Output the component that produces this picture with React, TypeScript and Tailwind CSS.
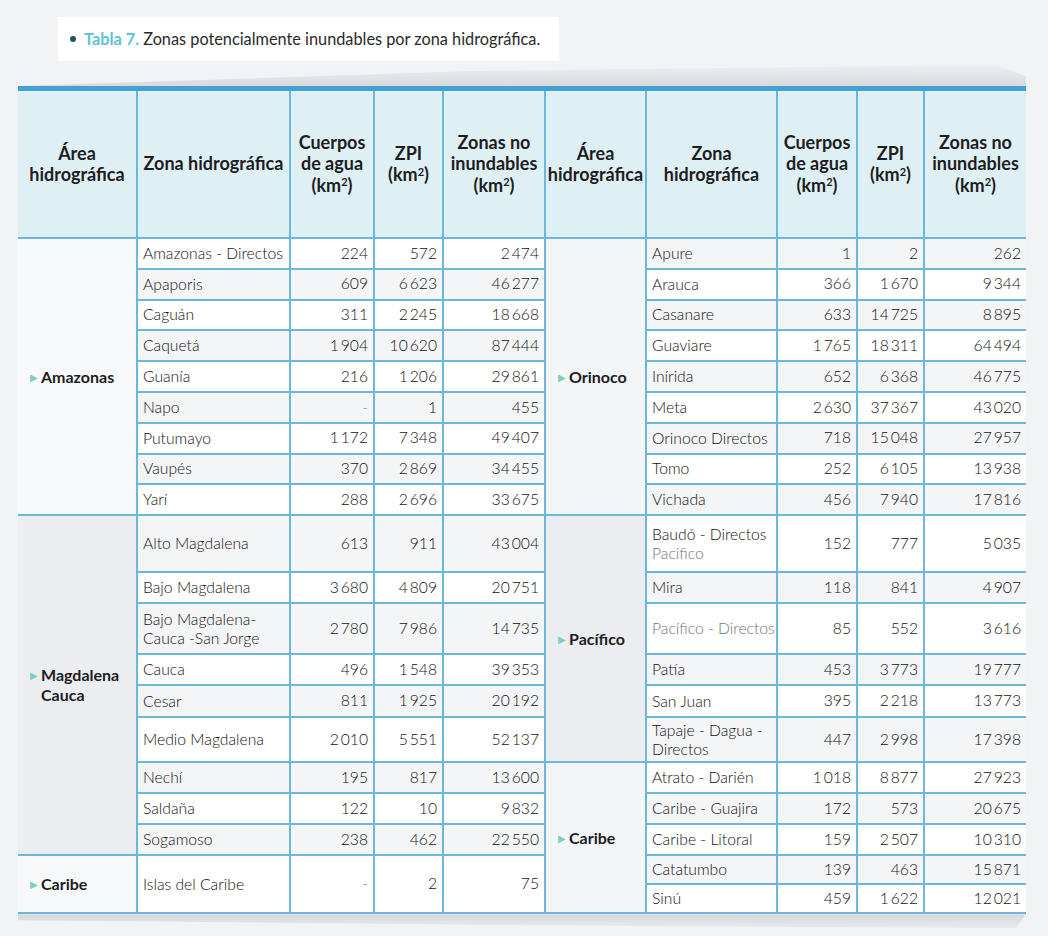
import React from 'react'

type DataRow = [string, string, string, string]

const leftRows: DataRow[] = [
  ['Amazonas - Directos', '224', '572', '2 474'],
  ['Apaporis', '609', '6 623', '46 277'],
  ['Caguán', '311', '2 245', '18 668'],
  ['Caquetá', '1 904', '10 620', '87 444'],
  ['Guanía', '216', '1 206', '29 861'],
  ['Napo', '-', '1', '455'],
  ['Putumayo', '1 172', '7 348', '49 407'],
  ['Vaupés', '370', '2 869', '34 455'],
  ['Yarí', '288', '2 696', '33 675'],
  ['Alto Magdalena', '613', '911', '43 004'],
  ['Bajo Magdalena', '3 680', '4 809', '20 751'],
  ['Bajo Magdalena-\nCauca -San Jorge', '2 780', '7 986', '14 735'],
  ['Cauca', '496', '1 548', '39 353'],
  ['Cesar', '811', '1 925', '20 192'],
  ['Medio Magdalena', '2 010', '5 551', '52 137'],
  ['Nechí', '195', '817', '13 600'],
  ['Saldaña', '122', '10', '9 832'],
  ['Sogamoso', '238', '462', '22 550'],
  ['Islas del Caribe', '-', '2', '75'],
]

const rightRows: DataRow[] = [
  ['Apure', '1', '2', '262'],
  ['Arauca', '366', '1 670', '9 344'],
  ['Casanare', '633', '14 725', '8 895'],
  ['Guaviare', '1 765', '18 311', '64 494'],
  ['Inírida', '652', '6 368', '46 775'],
  ['Meta', '2 630', '37 367', '43 020'],
  ['Orinoco Directos', '718', '15 048', '27 957'],
  ['Tomo', '252', '6 105', '13 938'],
  ['Vichada', '456', '7 940', '17 816'],
  ['Baudó - Directos', '152', '777', '5 035'],
  ['Mira', '118', '841', '4 907'],
  ['Pacífico - Directos', '85', '552', '3 616'],
  ['Patía', '453', '3 773', '19 777'],
  ['San Juan', '395', '2 218', '13 773'],
  ['Tapaje - Dagua -\nDirectos', '447', '2 998', '17 398'],
  ['Atrato - Darién', '1 018', '8 877', '27 923'],
  ['Caribe - Guajira', '172', '573', '20 675'],
  ['Caribe - Litoral', '159', '2 507', '10 310'],
  ['Catatumbo', '139', '463', '15 871'],
  ['Sinú', '459', '1 622', '12 021'],
]

const fmt = (s: string) => s.replace(/ /g, '\u2009')

function Km() {
  return (
    <>
      (km<sup className="text-[11px]">2</sup>)
    </>
  )
}

function Head({ children }: { children: React.ReactNode }) {
  return (
    <div className="bg-[#dff0f4] flex items-center justify-center text-center font-bold text-[18px] leading-[21.5px] text-[#1d1d1f]">
      <div>{children}</div>
    </div>
  )
}

function Area({ label, span, bg }: { label: React.ReactNode; span: string; bg: string }) {
  return (
    <div className={`${span} ${bg} flex items-center pl-[12px]`}>
      <div className="flex items-start gap-[3px]">
        <span className="text-[#7fcfbf] text-[10px] leading-[20px]">▶</span>
        <span className="font-bold text-[16px] leading-[20px] text-[#1d1d1f]">{label}</span>
      </div>
    </div>
  )
}

function Zone({ text, bg, span = '' }: { text: React.ReactNode; bg: string; span?: string }) {
  return (
    <div className={`${span} ${bg} flex items-center pl-[5px] text-[15.7px] leading-[19px] font-light text-[#141112] whitespace-pre-line`}>
      <div>{text}</div>
    </div>
  )
}

function Num({ v, bg, span = '' }: { v: string; bg: string; span?: string }) {
  return (
    <div
      className={`${span} ${bg} flex items-center justify-end pr-[5px] text-[15.7px] font-light ${
        v === '-' ? 'text-[#8a8a8a]' : 'text-[#141112]'
      }`}
    >
      {fmt(v)}
    </div>
  )
}

export default function App() {
  const cells: React.ReactNode[] = []

  for (let i = 0; i < 20; i++) {
    const lbg = i % 2 === 0 ? 'bg-white' : 'bg-[#f4f5f7]'
    const rbg = i % 2 === 0 ? 'bg-[#f4f5f7]' : 'bg-white'

    // lado izquierdo
    if (i === 0) cells.push(<Area key="a-amz" label="Amazonas" span="row-span-9" bg="bg-[#f8f9fa]" />)
    if (i === 9)
      cells.push(
        <Area
          key="a-mag"
          label={
            <>
              Magdalena
              <br />
              Cauca
            </>
          }
          span="row-span-9"
          bg="bg-[#ecedf0]"
        />
      )
    if (i === 18) cells.push(<Area key="a-car" label="Caribe" span="row-span-2" bg="bg-[#f7f8f9]" />)

    if (i < 18) {
      const r = leftRows[i]
      cells.push(<Zone key={`lz${i}`} text={r[0]} bg={lbg} />)
      cells.push(<Num key={`l1${i}`} v={r[1]} bg={lbg} />)
      cells.push(<Num key={`l2${i}`} v={r[2]} bg={lbg} />)
      cells.push(<Num key={`l3${i}`} v={r[3]} bg={lbg} />)
    } else if (i === 18) {
      const r = leftRows[18]
      cells.push(<Zone key="lz18" text={r[0]} bg="bg-white" span="row-span-2" />)
      cells.push(<Num key="l118" v={r[1]} bg="bg-white" span="row-span-2" />)
      cells.push(<Num key="l218" v={r[2]} bg="bg-white" span="row-span-2" />)
      cells.push(<Num key="l318" v={r[3]} bg="bg-white" span="row-span-2" />)
    }

    // lado derecho
    if (i === 0) cells.push(<Area key="a-ori" label="Orinoco" span="row-span-9" bg="bg-[#f4f5f7]" />)
    if (i === 9) cells.push(<Area key="a-pac" label="Pacífico" span="row-span-6" bg="bg-[#ecedf0]" />)
    if (i === 15) cells.push(<Area key="a-car2" label="Caribe" span="row-span-5" bg="bg-[#f4f5f7]" />)

    const r = rightRows[i]
    let zone: React.ReactNode = r[0]
    if (i === 9)
      zone = (
        <>
          Baudó - Directos
          <br />
          <span className="text-[#747474]">Pacifico</span>
        </>
      )
    if (i === 11) zone = <span className="text-[#747474]">{r[0]}</span>
    cells.push(<Zone key={`rz${i}`} text={zone} bg={rbg} />)
    cells.push(<Num key={`r1${i}`} v={r[1]} bg={rbg} />)
    cells.push(<Num key={`r2${i}`} v={r[2]} bg={rbg} />)
    cells.push(<Num key={`r3${i}`} v={r[3]} bg={rbg} />)
  }

  return (
    <div className="min-h-screen bg-[#f2f3f5] pt-[17px] font-['Lato','Liberation_Sans',sans-serif]">
      {/* título */}
      <div className="ml-[58px] w-[501px] h-[44px] bg-white flex items-center pl-[12px] gap-[8px] whitespace-nowrap">
        <span className="w-[6px] h-[6px] rounded-full bg-[#1f5566]" />
        <span className="text-[16.3px]">
          <span className="font-bold text-[#5ec3d4]">Tabla 7.</span>{' '}
          <span className="text-[#2a2a2a]">Zonas potencialmente inundables por zona hidrográfica.</span>
        </span>
      </div>

      {/* sombra superior */}
      <div className="ml-[18px] w-[1008px] h-[25px] bg-gradient-to-t from-[#d9dadd] to-transparent [clip-path:polygon(0_100%,45%_40%,97%_15%,100%_60%,100%_100%)]" />

      <div className="ml-[18px] w-[1008px] border-t-[5px] border-[#43a2cf]">
        <div className="grid bg-[#6bb8dc] gap-[2px] pb-[2px] grid-cols-[118px_151px_82px_67px_100px_99px_129px_78px_65px_101px] grid-rows-[146px_repeat(9,28.8px)_55px_29px_49px_29px_30px_43px_29px_29px_29px_27px_27px]">
          <Head>
            Área
            <br />
            hidrográfica
          </Head>
          <Head>Zona hidrográfica</Head>
          <Head>
            Cuerpos
            <br />
            de agua
            <br />
            <Km />
          </Head>
          <Head>
            ZPI
            <br />
            <Km />
          </Head>
          <Head>
            Zonas no
            <br />
            inundables
            <br />
            <Km />
          </Head>
          <Head>
            Área
            <br />
            hidrográfica
          </Head>
          <Head>
            Zona
            <br />
            hidrográfica
          </Head>
          <Head>
            Cuerpos
            <br />
            de agua
            <br />
            <Km />
          </Head>
          <Head>
            ZPI
            <br />
            <Km />
          </Head>
          <Head>
            Zonas no
            <br />
            inundables
            <br />
            <Km />
          </Head>
          {cells}
        </div>
      </div>

      {/* sombra inferior */}
      <div className="ml-[18px] w-[1008px] h-[20px] bg-gradient-to-b from-[#d6d7da] to-transparent [clip-path:polygon(0_0,100%_0,99%_70%,50%_55%,0_30%)]" />
    </div>
  )
}
